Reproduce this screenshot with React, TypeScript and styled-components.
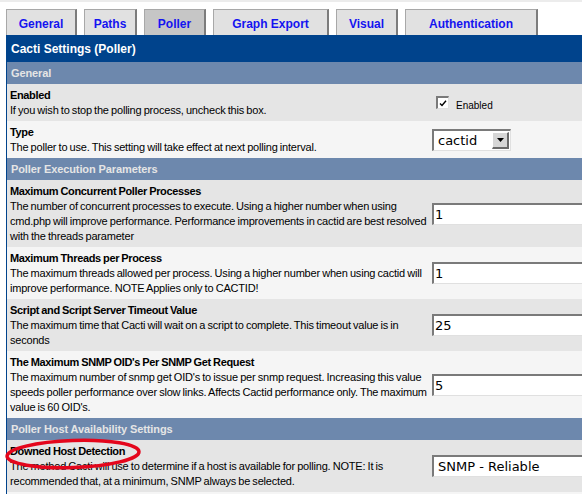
import React from "react";
import styled, { createGlobalStyle } from "styled-components";

const GlobalStyle = createGlobalStyle`
  html, body {
    margin: 0;
    padding: 0;
    background: #ffffff;
    overflow: hidden;
  }
  body {
    font-family: "Liberation Sans", Arial, sans-serif;
    color: #000000;
  }
`;

const Page = styled.div`
  width: 640px;
  height: 494px;
  overflow: hidden;
  border-top: 2px solid #ececec;
  padding-top: 7px;
  box-sizing: border-box;
`;

const TabBar = styled.div`
  display: flex;
  gap: 7px;
  padding-left: 6px;
  height: 26px;
`;

const Tab = styled.div<{ $w: number; $active?: boolean }>`
  width: ${(p) => p.$w}px;
  box-sizing: border-box;
  background: ${(p) => (p.$active ? "#c6c6c6" : "#e1e1e1")};
  border-top: 1px solid #a8a8a8;
  border-left: 1px solid #a8a8a8;
  border-right: 2px solid #7c7c7c;
  display: flex;
  align-items: center;
  justify-content: center;
  padding-top: 3px;
  font-size: 12px;
  font-weight: bold;
  color: #1414f0;
`;

const Table = styled.div`
  margin-left: 6px;
  border-left: 1px solid #00438c;
`;

const TitleBar = styled.div`
  height: 27px;
  background: #00438c;
  color: #ffffff;
  font-size: 12px;
  font-weight: bold;
  display: flex;
  align-items: center;
  padding-left: 4px;
`;

const SectionHeader = styled.div`
  height: 22px;
  background: #6d88ad;
  color: #e5e5e5;
  font-size: 11px;
  font-weight: bold;
  letter-spacing: -0.1px;
  display: flex;
  align-items: center;
  padding-left: 4px;
`;

const Row = styled.div<{ $alt?: boolean }>`
  position: relative;
  display: grid;
  grid-template-columns: 425px 1fr;
  background: ${(p) => (p.$alt ? "#f5f5f5" : "#e5e5e5")};
`;

const EmptyRow = styled.div`
  height: 20px;
  background: #f5f5f5;
`;

const Label = styled.div`
  padding: 4px 4px 3px 3px;
  font-size: 11px;
  line-height: 15px;
`;

const FieldTitle = styled.div`
  font-weight: bold;
  letter-spacing: -0.35px;
  word-spacing: -0.5px;
`;

const FieldDesc = styled.div`
  white-space: nowrap;
  letter-spacing: -0.2px;
  word-spacing: -0.6px;
`;

const Control = styled.div`
  display: flex;
  align-items: center;
`;

const TextInput = styled.div`
  width: 200px;
  height: 22px;
  box-sizing: border-box;
  background: #ffffff;
  border-top: 2px solid #7a7a7a;
  border-left: 2px solid #7a7a7a;
  border-bottom: 1px solid #e0e0e0;
  border-right: 1px solid #e0e0e0;
  font-family: "DejaVu Sans", sans-serif;
  font-size: 13px;
  line-height: 19px;
  padding-left: 1px;
`;

const Select = styled.div<{ $w: number }>`
  width: ${(p) => p.$w}px;
  height: 22px;
  box-sizing: border-box;
  background: #ffffff;
  border-top: 2px solid #7a7a7a;
  border-left: 2px solid #7a7a7a;
  border-bottom: 1px solid #e0e0e0;
  border-right: 1px solid #e0e0e0;
  display: flex;
  align-items: center;
  justify-content: space-between;
  font-family: "DejaVu Sans", sans-serif;
  font-size: 13px;
  padding-left: 4px;
  padding-right: 1px;
`;

const ArrowButton = styled.div`
  width: 17px;
  height: 17px;
  box-sizing: border-box;
  background: #d6d6d6;
  border-top: 1px solid #ffffff;
  border-left: 1px solid #ffffff;
  border-right: 2px solid #6a6a6a;
  border-bottom: 2px solid #6a6a6a;
  display: flex;
  align-items: center;
  justify-content: center;
`;

const CheckWrap = styled.div`
  display: flex;
  align-items: flex-end;
  gap: 7px;
  padding-left: 4px;
  font-size: 10px;
`;

const CheckBox = styled.div`
  width: 13px;
  height: 13px;
  box-sizing: border-box;
  background: #ffffff;
  border-top: 2px solid #7a7a7a;
  border-left: 2px solid #7a7a7a;
  border-bottom: 1px solid #e0e0e0;
  border-right: 1px solid #e0e0e0;
  display: flex;
  align-items: center;
  justify-content: center;
`;

const CheckText = styled.span`
  position: relative;
  top: 2px;
`;

const Circle = styled.svg`
  position: absolute;
  left: -7px;
  top: -5px;
  pointer-events: none;
`;

type Field = {
  title: string;
  desc: string[];
  control: React.ReactNode;
  circled?: boolean;
};

const TextBox = ({ value }: { value: string }) => (
  <Control>
    <TextInput>{value}</TextInput>
  </Control>
);

const DropDown = ({ value, width }: { value: string; width: number }) => (
  <Control>
    <Select $w={width}>
      <span>{value}</span>
      <ArrowButton>
        <svg width="7" height="4" viewBox="0 0 7 4">
          <polygon points="0,0 7,0 3.5,4" fill="#000" />
        </svg>
      </ArrowButton>
    </Select>
  </Control>
);

const sections: { name: string; fields: Field[] }[] = [
  {
    name: "General",
    fields: [
      {
        title: "Enabled",
        desc: ["If you wish to stop the polling process, uncheck this box."],
        control: (
          <Control>
            <CheckWrap>
              <CheckBox>
                <svg width="8" height="7" viewBox="0 0 8 7">
                  <path d="M1 3.5 L3 5.5 L7 0.8" stroke="#000" strokeWidth="1.4" fill="none" />
                </svg>
              </CheckBox>
              <CheckText>Enabled</CheckText>
            </CheckWrap>
          </Control>
        ),
      },
      {
        title: "Type",
        desc: ["The poller to use. This setting will take effect at next polling interval."],
        control: <DropDown value="cactid" width={79} />,
      },
    ],
  },
  {
    name: "Poller Execution Parameters",
    fields: [
      {
        title: "Maximum Concurrent Poller Processes",
        desc: [
          "The number of concurrent processes to execute. Using a higher number when using",
          "cmd.php will improve performance. Performance improvements in cactid are best resolved",
          "with the threads parameter",
        ],
        control: <TextBox value="1" />,
      },
      {
        title: "Maximum Threads per Process",
        desc: [
          "The maximum threads allowed per process. Using a higher number when using cactid will",
          "improve performance. NOTE Applies only to CACTID!",
        ],
        control: <TextBox value="1" />,
      },
      {
        title: "Script and Script Server Timeout Value",
        desc: [
          "The maximum time that Cacti will wait on a script to complete. This timeout value is in",
          "seconds",
        ],
        control: <TextBox value="25" />,
      },
      {
        title: "The Maximum SNMP OID's Per SNMP Get Request",
        desc: [
          "The maximum number of snmp get OID's to issue per snmp request. Increasing this value",
          "speeds poller performance over slow links. Affects Cactid performance only. The maximum",
          "value is 60 OID's.",
        ],
        control: <TextBox value="5" />,
      },
    ],
  },
  {
    name: "Poller Host Availability Settings",
    fields: [
      {
        title: "Downed Host Detection",
        desc: [
          "The method Cacti will use to determine if a host is available for polling. NOTE: It is",
          "recommended that, at a minimum, SNMP always be selected.",
        ],
        control: <DropDown value="SNMP - Reliable" width={220} />,
        circled: true,
      },
    ],
  },
];

const tabs = [
  { name: "General", w: 71 },
  { name: "Paths", w: 53 },
  { name: "Poller", w: 62, active: true },
  { name: "Graph Export", w: 116 },
  { name: "Visual", w: 62 },
  { name: "Authentication", w: 133 },
];

const App = () => {
  return (
    <Page>
      <GlobalStyle />
      <TabBar>
        {tabs.map((t) => (
          <Tab key={t.name} $w={t.w} $active={t.active}>
            {t.name}
          </Tab>
        ))}
      </TabBar>
      <Table>
        <TitleBar>Cacti Settings (Poller)</TitleBar>
        {sections.map((s) => (
          <React.Fragment key={s.name}>
            <SectionHeader>{s.name}</SectionHeader>
            {s.fields.map((f, i) => (
              <Row key={f.title} $alt={i % 2 === 1}>
                <Label>
                  <FieldTitle>{f.title}</FieldTitle>
                  {f.desc.map((line, j) => (
                    <FieldDesc key={j}>{line}</FieldDesc>
                  ))}
                </Label>
                {f.control}
                {f.circled && (
                  <Circle width="150" height="40" viewBox="0 0 150 40">
                    <ellipse
                      cx="73"
                      cy="19"
                      rx="66"
                      ry="13.5"
                      transform="rotate(-2 73 19)"
                      fill="none"
                      stroke="#e4061c"
                      strokeWidth="3.5"
                    />
                  </Circle>
                )}
              </Row>
            ))}
          </React.Fragment>
        ))}
        <EmptyRow />
      </Table>
    </Page>
  );
};

export default App;
